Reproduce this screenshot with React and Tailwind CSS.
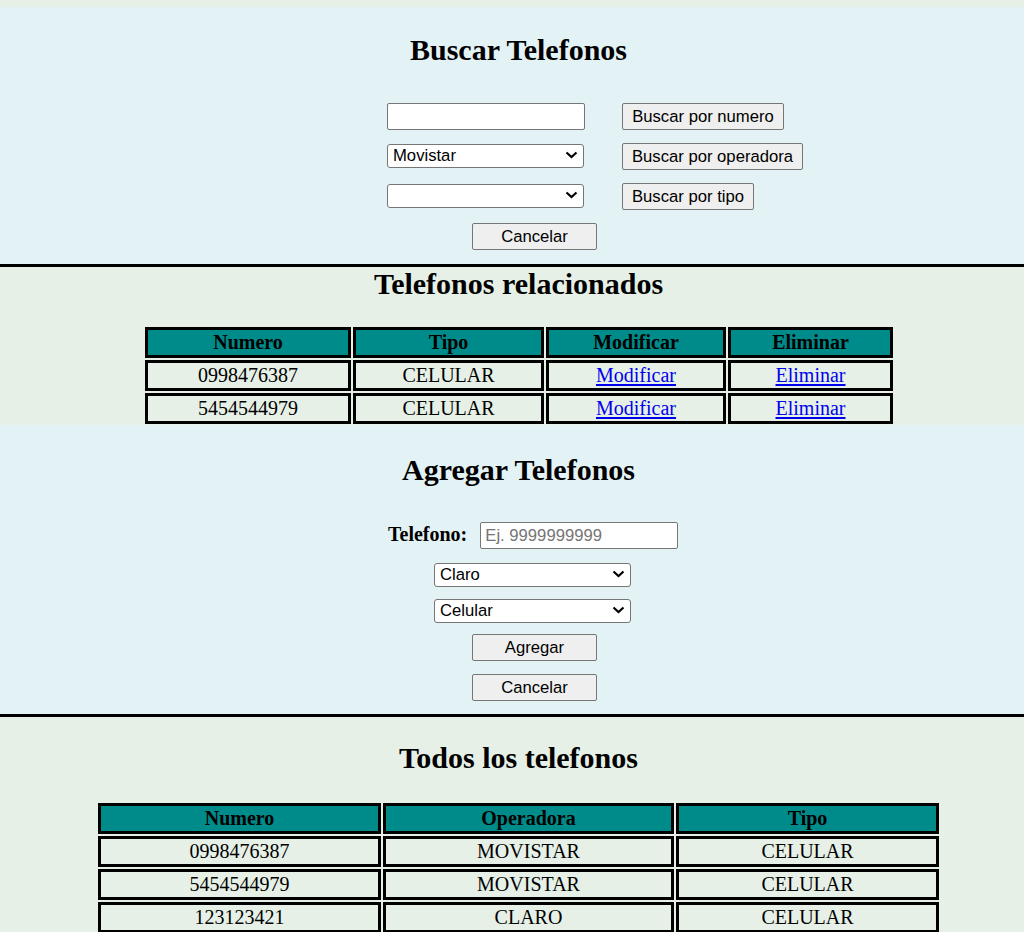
import React from 'react';

// Hand-tuned sizes: page looks like a 125% zoomed plain HTML page
const serif = "font-['Liberation_Serif','Times_New_Roman',serif]";
const sans = "font-['Liberation_Sans',Arial,sans-serif]";

function Btn({ w, children }) {
  return (
    <button
      className={`${w} h-[27px] pt-[2px] bg-[#efefef] border border-[#767676] rounded-[2px] text-[16.67px] leading-none text-black ${sans}`}
    >
      {children}
    </button>
  );
}

function Select({ w, value, options }) {
  return (
    <div className={`relative ${w} h-[24px]`}>
      <select
        defaultValue={value}
        className={`appearance-none w-full h-full bg-white border border-[#767676] rounded-[3px] pl-[5px] text-[16.67px] leading-none text-black ${sans}`}
      >
        {options.map((o) => (
          <option key={o} value={o}>{o}</option>
        ))}
      </select>
      <svg
        className="absolute right-[6px] top-[8px] pointer-events-none"
        width="13"
        height="8"
        viewBox="0 0 13 8"
      >
        <path d="M1.5 1.5 L6.5 6 L11.5 1.5" fill="none" stroke="black" strokeWidth="2.2" />
      </svg>
    </div>
  );
}

function Heading({ className, children }) {
  return (
    <h2 className={`pl-[13px] text-center text-[30px] leading-[34px] font-bold text-black ${serif} ${className}`}>
      {children}
    </h2>
  );
}

function Grid({ cols, className, head, rows }) {
  const cell = `border-[3px] border-black h-[31px] text-center text-[20px] leading-[25px] text-black ${serif}`;
  return (
    <div className={`grid ${cols} gap-[2px] ${className}`}>
      {head.map((h) => (
        <div key={h} className={`${cell} bg-[#008b8b] font-bold`}>{h}</div>
      ))}
      {rows.map((r, i) =>
        r.map((c, j) => (
          <div key={i + '-' + j} className={cell}>
            {c}
          </div>
        ))
      )}
    </div>
  );
}

const link = (t) => (
  <a href="#" className="text-[#0000ee] underline underline-offset-[2px]">{t}</a>
);

export default function App() {
  return (
    <div className="w-full min-h-screen bg-[#e6f0e6]">
      <div className="h-[7px] bg-[#e6f0e6]" />

      {/* Buscar */}
      <section className="bg-[#e3f2f4] pt-[26px] pb-[14px]">
        <Heading>Buscar Telefonos</Heading>
        <div className="mt-[36px] ml-[387px] grid grid-cols-[235px_auto] gap-y-[13px] items-start">
          <input
            type="text"
            className={`w-[198px] h-[27px] bg-white border border-[#767676] rounded-[2px] px-[4px] text-[16.67px] ${sans}`}
          />
          <div><Btn w="w-[162px]">Buscar por numero</Btn></div>
          <Select w="w-[197px]" value="Movistar" options={['Movistar', 'Claro', 'CNT']} />
          <div><Btn w="w-[181px]">Buscar por operadora</Btn></div>
          <Select w="w-[197px]" value="" options={['', 'Celular', 'Convencional']} />
          <div><Btn w="w-[132px]">Buscar por tipo</Btn></div>
          <div className="ml-[85px]"><Btn w="w-[125px]">Cancelar</Btn></div>
        </div>
      </section>

      <div className="h-[3px] bg-black" />

      {/* Relacionados */}
      <section className="bg-[#e6f0e6] pb-[1px]">
        <Heading>Telefonos relacionados</Heading>
        <Grid
          cols="grid-cols-[206px_191px_180px_165px]"
          className="mt-[26px] ml-[145px] w-[748px]"
          head={['Numero', 'Tipo', 'Modificar', 'Eliminar']}
          rows={[
            ['0998476387', 'CELULAR', link('Modificar'), link('Eliminar')],
            ['5454544979', 'CELULAR', link('Modificar'), link('Eliminar')],
          ]}
        />
      </section>

      {/* Agregar */}
      <section className="bg-[#e3f2f4] pt-[28px] pb-[13px]">
        <Heading>Agregar Telefonos</Heading>
        <div className="mt-[35px] ml-[388px] flex items-start gap-[13px]">
          <label className={`mt-[1px] text-[20px] leading-[23px] font-bold text-black ${serif}`}>Telefono:</label>
          <input
            type="text"
            placeholder="Ej. 9999999999"
            className={`w-[198px] h-[27px] bg-white border border-[#767676] rounded-[2px] px-[4px] text-[16.67px] placeholder:text-[#757575] ${sans}`}
          />
        </div>
        <div className="mt-[13px] ml-[434px] flex flex-col items-start gap-[12px]">
          <Select w="w-[197px]" value="Claro" options={['Movistar', 'Claro', 'CNT']} />
          <Select w="w-[197px]" value="Celular" options={['Celular', 'Convencional']} />
        </div>
        <div className="mt-[12px] ml-[472px] flex flex-col items-start gap-[13px]">
          <Btn w="w-[125px]">Agregar</Btn>
          <Btn w="w-[125px]">Cancelar</Btn>
        </div>
      </section>

      <div className="h-[3px] bg-black" />

      {/* Todos */}
      <section className="bg-[#e6f0e6] pt-[24px] pb-[20px]">
        <Heading>Todos los telefonos</Heading>
        <Grid
          cols="grid-cols-[283px_291px_263px]"
          className="mt-[28px] ml-[98px] w-[841px]"
          head={['Numero', 'Operadora', 'Tipo']}
          rows={[
            ['0998476387', 'MOVISTAR', 'CELULAR'],
            ['5454544979', 'MOVISTAR', 'CELULAR'],
            ['123123421', 'CLARO', 'CELULAR'],
          ]}
        />
      </section>
    </div>
  );
}
